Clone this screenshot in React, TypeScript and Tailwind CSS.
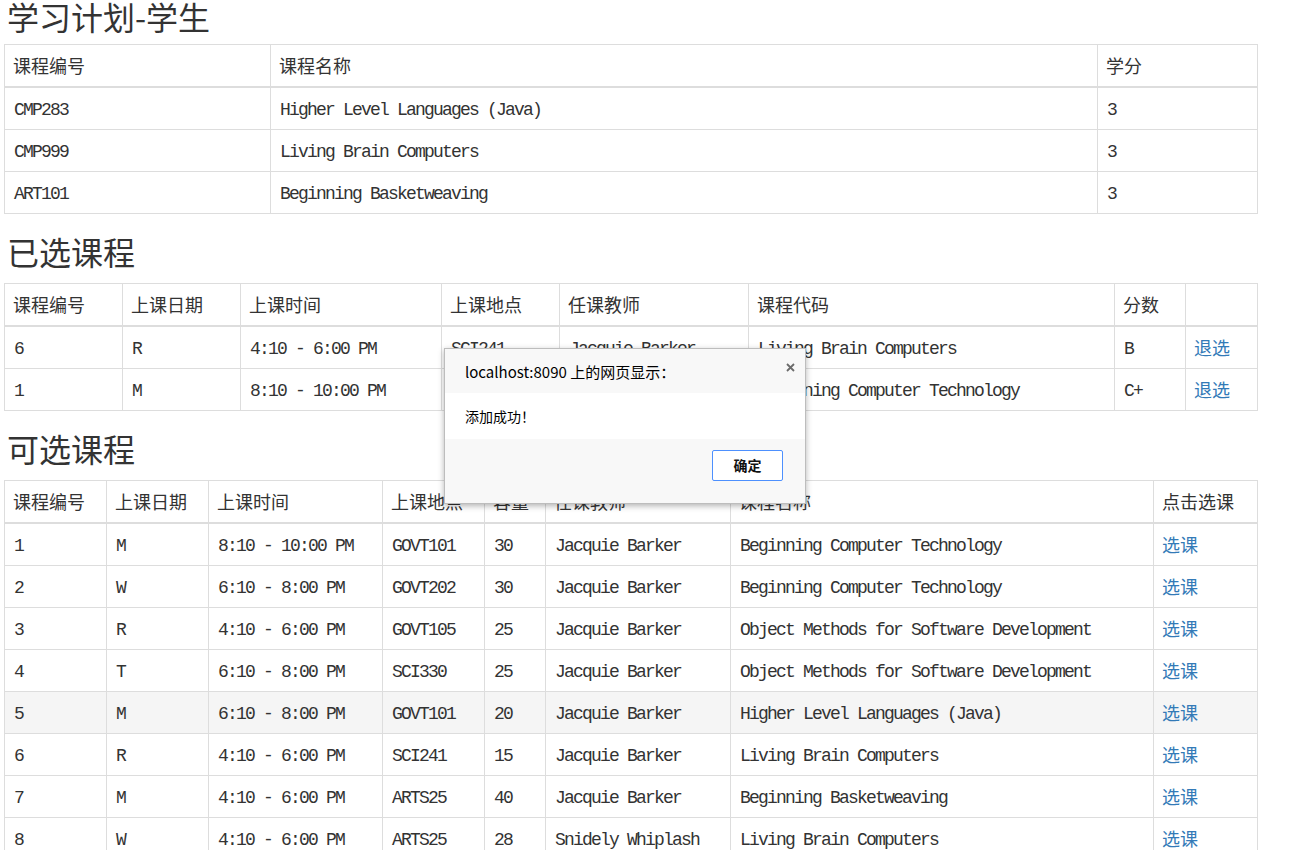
import React from "react";

const CJK = "font-['Noto_Sans_CJK_SC','Noto_Sans_CJK_JP',sans-serif]";
const MONO = "font-['Liberation_Mono','Noto_Sans_CJK_SC',monospace] text-[18px] tracking-[-1.8px]";

type Cell = { t: string; link?: boolean };

function Table({
  widths,
  headers,
  rows,
  hoverRow,
}: {
  widths: number[];
  headers: string[];
  rows: Cell[][];
  hoverRow?: number;
}) {
  return (
    <table className="ml-[4px] w-[1253px] table-fixed border-collapse text-[#333]">
      <colgroup>
        {widths.map((w, i) => (
          <col key={i} style={{ width: w }} />
        ))}
      </colgroup>
      <thead>
        <tr>
          {headers.map((h, i) => (
            <th
              key={i}
              className="border border-b-2 border-[#ddd] px-[8px] py-[8px] text-left align-top font-normal"
            >
              <div className={`h-[25px] overflow-hidden whitespace-nowrap text-[18px] leading-[25px] ${CJK}`}>{h}</div>
            </th>
          ))}
        </tr>
      </thead>
      <tbody>
        {rows.map((r, ri) => (
          <tr key={ri} className={ri === hoverRow ? "bg-[#f5f5f5]" : ""}>
            {r.map((c, ci) => (
              <td key={ci} className="border border-[#ddd] px-[8px] py-[8px] align-top">
                {c.link ? (
                  <div className={`h-[25px] overflow-hidden whitespace-nowrap text-[18px] leading-[24px] text-[#337ab7] ${CJK}`}>
                    {c.t}
                  </div>
                ) : (
                  <div className={`h-[25px] overflow-hidden whitespace-nowrap pl-[1px] pt-[4px] leading-[21px] ${MONO}`}>{c.t}</div>
                )}
              </td>
            ))}
          </tr>
        ))}
      </tbody>
    </table>
  );
}

function Title({ children, first }: { children: React.ReactNode; first?: boolean }) {
  return (
    <h2
      className={`${first ? "mt-0 mb-[12px] h-[32px] leading-[32px]" : "mt-[19px] mb-[14px] h-[36px] leading-[36px]"} pl-[7px] text-[32px] font-normal text-[#333] ${CJK}`}
    >
      {children}
    </h2>
  );
}

const c = (t: string): Cell => ({ t });
const l = (t: string): Cell => ({ t, link: true });

export default function App() {
  const plan = [
    [c("CMP283"), c("Higher Level Languages (Java)"), c("3")],
    [c("CMP999"), c("Living Brain Computers"), c("3")],
    [c("ART101"), c("Beginning Basketweaving"), c("3")],
  ];
  const chosen = [
    [c("6"), c("R"), c("4:10 - 6:00 PM"), c("SCI241"), c("Jacquie Barker"), c("Living Brain Computers"), c("B"), l("退选")],
    [c("1"), c("M"), c("8:10 - 10:00 PM"), c("GOVT101"), c("Jacquie Barker"), c("Beginning Computer Technology"), c("C+"), l("退选")],
  ];
  const avail: [string, string, string, string, string, string, string][] = [
    ["1", "M", "8:10 - 10:00 PM", "GOVT101", "30", "Jacquie Barker", "Beginning Computer Technology"],
    ["2", "W", "6:10 - 8:00 PM", "GOVT202", "30", "Jacquie Barker", "Beginning Computer Technology"],
    ["3", "R", "4:10 - 6:00 PM", "GOVT105", "25", "Jacquie Barker", "Object Methods for Software Development"],
    ["4", "T", "6:10 - 8:00 PM", "SCI330", "25", "Jacquie Barker", "Object Methods for Software Development"],
    ["5", "M", "6:10 - 8:00 PM", "GOVT101", "20", "Jacquie Barker", "Higher Level Languages (Java)"],
    ["6", "R", "4:10 - 6:00 PM", "SCI241", "15", "Jacquie Barker", "Living Brain Computers"],
    ["7", "M", "4:10 - 6:00 PM", "ARTS25", "40", "Jacquie Barker", "Beginning Basketweaving"],
    ["8", "W", "4:10 - 6:00 PM", "ARTS25", "28", "Snidely Whiplash", "Living Brain Computers"],
  ];
  const availRows = avail.map((r) => [...r.map(c), l("选课")]);

  return (
    <div className="relative min-h-[850px] bg-white">
      <Title first>学习计划-学生</Title>
      <Table widths={[266, 827, 160]} headers={["课程编号", "课程名称", "学分"]} rows={plan} />

      <Title>已选课程</Title>
      <Table
        widths={[118, 118, 201, 118, 189, 366, 71, 72]}
        headers={["课程编号", "上课日期", "上课时间", "上课地点", "任课教师", "课程代码", "分数", ""]}
        rows={chosen}
      />

      <Title>可选课程</Title>
      <Table
        widths={[102, 102, 174, 102, 61, 185, 423, 104]}
        headers={["课程编号", "上课日期", "上课时间", "上课地点", "容量", "任课教师", "课程名称", "点击选课"]}
        rows={availRows}
        hoverRow={4}
      />

      {/* alert dialog */}
      <div
        className={`absolute left-[444px] top-[348px] w-[362px] border border-[#bdbdbd] bg-[#f8f8f8] shadow-[0_2px_6px_rgba(0,0,0,0.3)] ${CJK}`}
      >
        <div className="relative h-[44px] pl-[20px] pt-[13px] text-[15px] leading-[20px] text-[#000]">
          localhost:8090 上的网页显示：
          <svg
            className="absolute right-[10px] top-[14px]"
            width="9"
            height="9"
            viewBox="0 0 9 9"
          >
            <path d="M1 1 L8 8 M8 1 L1 8" stroke="#6b6b6b" strokeWidth="1.8" />
          </svg>
        </div>
        <div className="h-[46px] bg-white pl-[20px] pt-[13px] text-[14px] leading-[20px] text-[#000]">
          添加成功！
        </div>
        <div className="flex h-[64px] justify-end pr-[22px] pt-[11px]">
          <button className="h-[31px] w-[71px] rounded-[2px] border border-[#4d90fe] bg-white text-[14px] font-bold text-[#111]">
            确定
          </button>
        </div>
      </div>
    </div>
  );
}
